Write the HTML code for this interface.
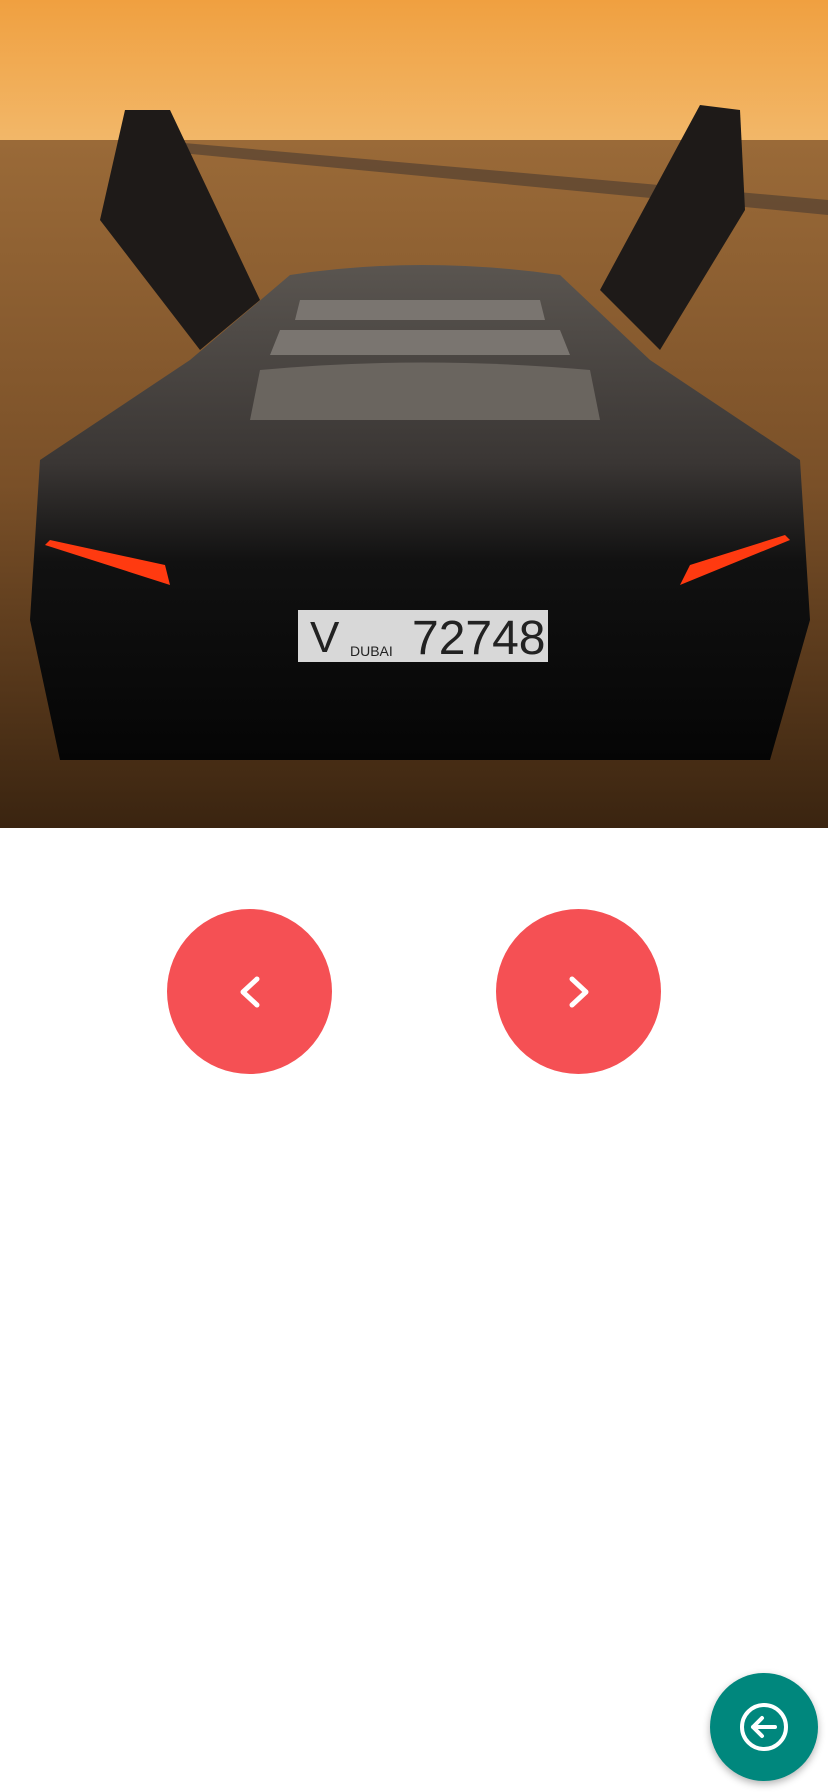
<!DOCTYPE html>
<html><head><meta charset="utf-8"><style>
html,body{margin:0;padding:0;width:828px;height:1792px;background:#fff;overflow:hidden;font-family:"Liberation Sans",sans-serif}
.img{position:absolute;left:0;top:0;width:828px;height:828px}
.btn{position:absolute;width:165px;height:165px;border-radius:50%;background:#f55054}
.fab{position:absolute;left:710px;top:1673px;width:108px;height:108px;border-radius:50%;background:#00877d;box-shadow:0 3px 8px rgba(0,0,0,.3)}
</style></head><body>
<svg class="img" viewBox="0 0 828 828" xmlns="http://www.w3.org/2000/svg">
<defs>
<linearGradient id="sky" x1="0" y1="0" x2="0" y2="1"><stop offset="0" stop-color="#f0a040"/><stop offset="1" stop-color="#f2b86a"/></linearGradient>
<linearGradient id="sand" x1="0" y1="0" x2="0" y2="1"><stop offset="0" stop-color="#9a6a38"/><stop offset="0.5" stop-color="#7a5028"/><stop offset="1" stop-color="#3a2410"/></linearGradient>
<linearGradient id="car" x1="0" y1="0" x2="0" y2="1"><stop offset="0" stop-color="#5a5550"/><stop offset="0.4" stop-color="#3a3634"/><stop offset="0.6" stop-color="#111"/><stop offset="1" stop-color="#050505"/></linearGradient>
</defs>
<rect width="828" height="145" fill="url(#sky)"/>
<rect y="140" width="828" height="688" fill="url(#sand)"/>
<path d="M150 140 L828 200 L828 215 L150 150Z" fill="#4a3a30" opacity=".6"/>
<path d="M125 110 L170 110 L260 300 L200 350 L100 220Z" fill="#1e1a18"/>
<path d="M700 105 L740 110 L745 210 L660 350 L600 290Z" fill="#1e1a18"/>
<path d="M290 275 Q420 255 560 275 L650 360 L800 460 L810 620 L770 760 L60 760 L30 620 L40 460 L190 360Z" fill="url(#car)"/>
<path d="M260 370 Q420 355 590 370 L600 420 L250 420Z" fill="#6a655f"/>
<path d="M280 330 L560 330 L570 355 L270 355Z" fill="#7a7570"/>
<path d="M300 300 L540 300 L545 320 L295 320Z" fill="#7a7570"/>
<path d="M45 545 L170 585 L165 565 L50 540Z" fill="#ff3a10"/>
<path d="M790 540 L680 585 L690 565 L785 535Z" fill="#ff3a10"/>
<rect x="298" y="610" width="250" height="52" fill="#d8d8d8"/>
<text x="310" y="652" font-size="44" fill="#222" font-family="Liberation Sans">V</text>
<text x="412" y="654" font-size="48" fill="#222" font-family="Liberation Sans">72748</text>
<text x="350" y="656" font-size="14" fill="#222" font-family="Liberation Sans">DUBAI</text>
</svg>
<div class="btn" style="left:167px;top:909px"><svg width="165" height="165"><path d="M90 70 L76 83 L90 96" stroke="#fff" stroke-width="5" fill="none" stroke-linecap="round" stroke-linejoin="round"/></svg></div>
<div class="btn" style="left:496px;top:909px"><svg width="165" height="165"><path d="M76 70 L90 83 L76 96" stroke="#fff" stroke-width="5" fill="none" stroke-linecap="round" stroke-linejoin="round"/></svg></div>
<div class="fab"><svg width="108" height="108"><circle cx="54" cy="54" r="22" stroke="#fff" stroke-width="4" fill="none"/><path d="M65 54 H43 M52 45 L43 54 L52 63" stroke="#fff" stroke-width="4" fill="none" stroke-linecap="round" stroke-linejoin="round"/></svg></div>
</body></html>
